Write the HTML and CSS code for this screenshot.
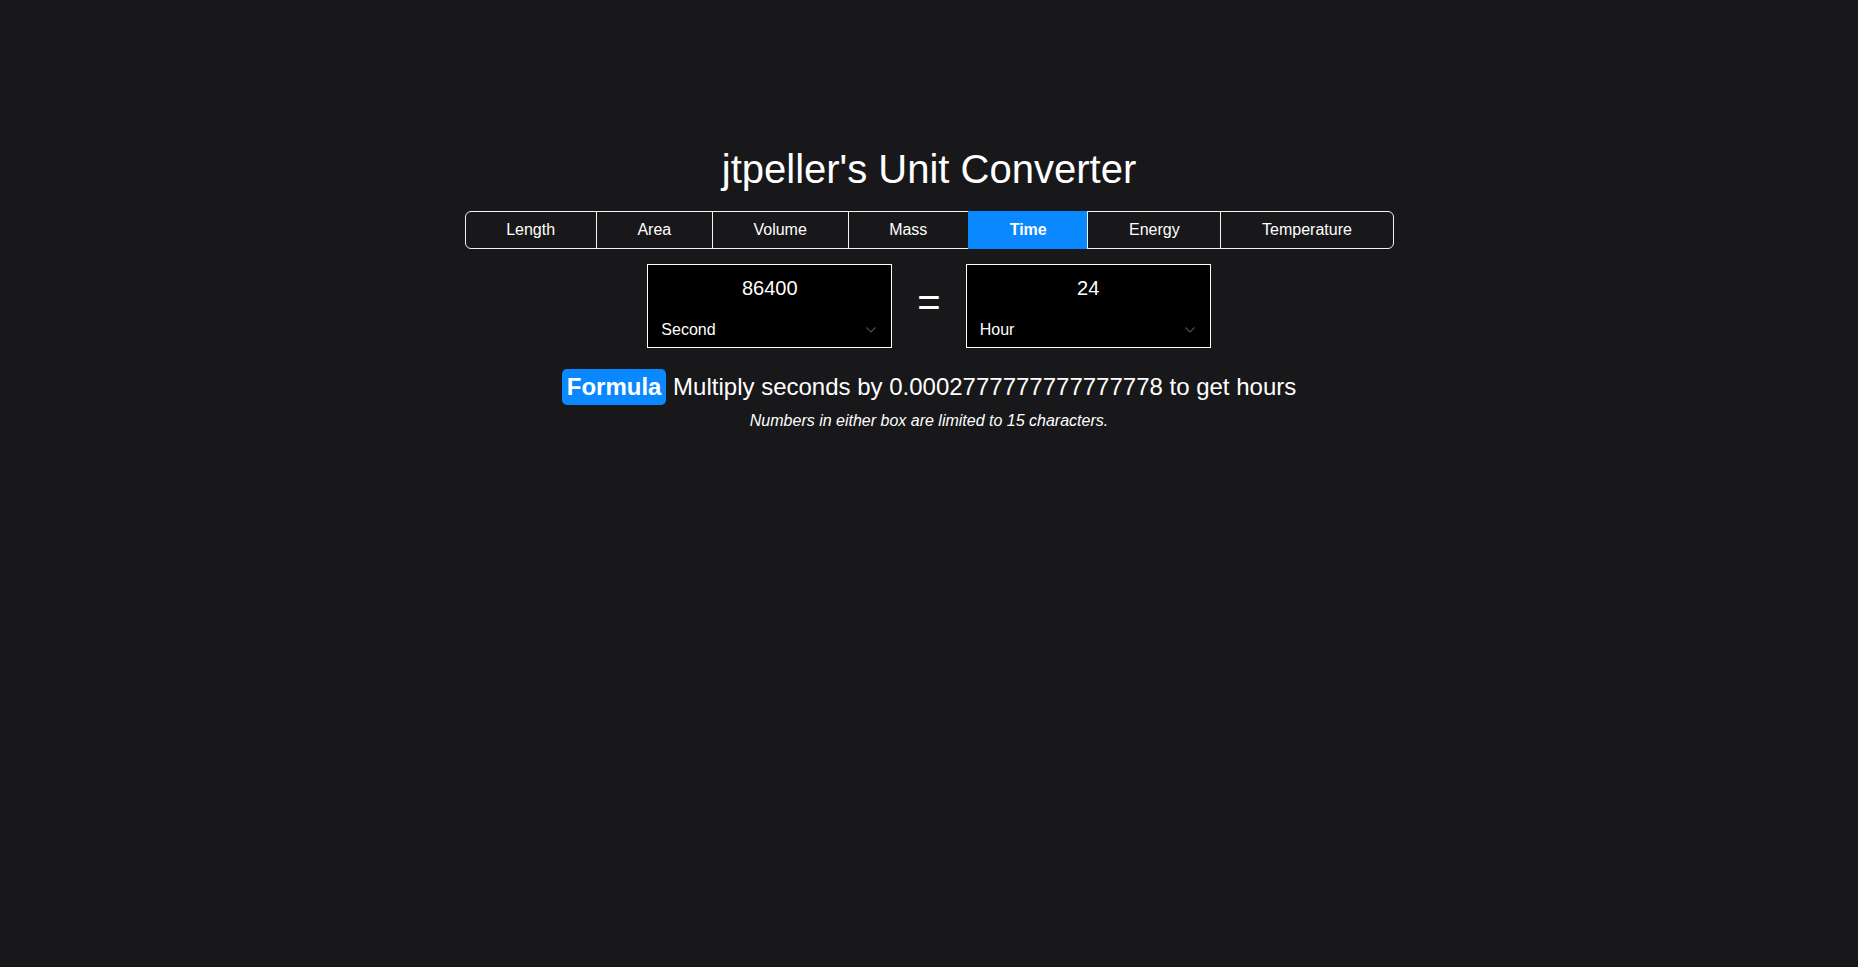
FILE: index.html
```html
<!DOCTYPE html>
<html lang="en">
<head>
<meta charset="utf-8">
<title>jtpeller's Unit Converter</title>
<link rel="stylesheet" href="styles.css">
</head>
<body>
<main class="page">
  <h1 class="title">jtpeller's Unit Converter</h1>
  <nav class="tabs">
    <button class="tab">Length</button>
    <button class="tab">Area</button>
    <button class="tab">Volume</button>
    <button class="tab">Mass</button>
    <button class="tab tab-active">Time</button>
    <button class="tab">Energy</button>
    <button class="tab">Temperature</button>
  </nav>
  <section class="converter">
    <div class="unit-box">
      <input class="unit-value" type="text" value="86400">
      <div class="unit-select-row">
        <select class="unit-select"><option>Second</option></select>
        <svg class="chevron" width="10" height="6" viewBox="0 0 10 6"><path d="M0.5 0.5 L5 5 L9.5 0.5" fill="none" stroke="#4c4c52" stroke-width="1.2"/></svg>
      </div>
    </div>
    <span class="equals">=</span>
    <div class="unit-box">
      <input class="unit-value" type="text" value="24">
      <div class="unit-select-row">
        <select class="unit-select"><option>Hour</option></select>
        <svg class="chevron" width="10" height="6" viewBox="0 0 10 6"><path d="M0.5 0.5 L5 5 L9.5 0.5" fill="none" stroke="#4c4c52" stroke-width="1.2"/></svg>
      </div>
    </div>
  </section>
  <p class="formula"><span class="badge">Formula</span> Multiply seconds by 0.0002777777777777778 to get hours</p>
  <p class="note">Numbers in either box are limited to 15 characters.</p>
</main>
</body>
</html>
```

FILE: styles.css
```css
* { box-sizing: border-box; }

html, body {
  margin: 0;
  padding: 0;
  background: #18181a;
  color: #fff;
  font-family: "Liberation Sans", Arial, sans-serif;
  font-size: 16px;
  line-height: 1.5;
}

.page {
  display: flex;
  flex-direction: column;
  align-items: center;
  padding-top: 145px;
}

.title {
  margin: 0 0 18px;
  font-size: 40px;
  font-weight: 400;
  line-height: 48px;
}

.tabs {
  display: flex;
  width: 50%;
}

.tab {
  flex: 1 1 auto;
  margin: 0;
  padding: 6px 12px;
  font: inherit;
  line-height: 24px;
  color: #fff;
  background: transparent;
  border: 1px solid #f2f2f2;
  border-radius: 0;
}

.tab + .tab { margin-left: -1px; }
.tab:first-child { border-radius: 6px 0 0 6px; }
.tab:last-child { border-radius: 0 6px 6px 0; }

.tab-active {
  background: #0a88ff;
  border-color: #0a88ff;
  font-weight: 700;
}

.converter {
  display: flex;
  align-items: center;
  margin-top: 15px;
}

.unit-box {
  display: flex;
  flex-direction: column;
  width: 245px;
  height: 84px;
  background: #000;
  border: 1px solid #fff;
}

.unit-value {
  height: 42px;
  padding: 8px 10px 4px;
  margin: 0;
  border: none;
  outline: none;
  background: #000;
  color: #fff;
  font-family: inherit;
  font-size: 20px;
  line-height: 30px;
  text-align: center;
}

.unit-select-row {
  display: flex;
  align-items: center;
  padding: 0 15px 0 13px;
  flex: 1;
}

.unit-select {
  flex: 1;
  appearance: none;
  -webkit-appearance: none;
  margin: 0;
  padding: 6px 0 0;
  border: none;
  outline: none;
  background: #000;
  color: #fff;
  font-family: inherit;
  font-size: 16px;
  line-height: 24px;
}

.chevron {
  display: block;
  margin-top: 6px;
}

.equals {
  margin: 0 25px;
  font-size: 40px;
  line-height: 40px;
  margin-top: -8px;
}

.formula {
  margin: 21px 0 0;
  font-size: 24px;
  line-height: 36px;
}

.badge {
  display: inline-block;
  padding: 0 5px;
  background: #0a88ff;
  border-radius: 5px;
  font-weight: 700;
}

.note {
  margin: 4px 0 0;
  font-style: italic;
  font-size: 16px;
  line-height: 24px;
}
```
